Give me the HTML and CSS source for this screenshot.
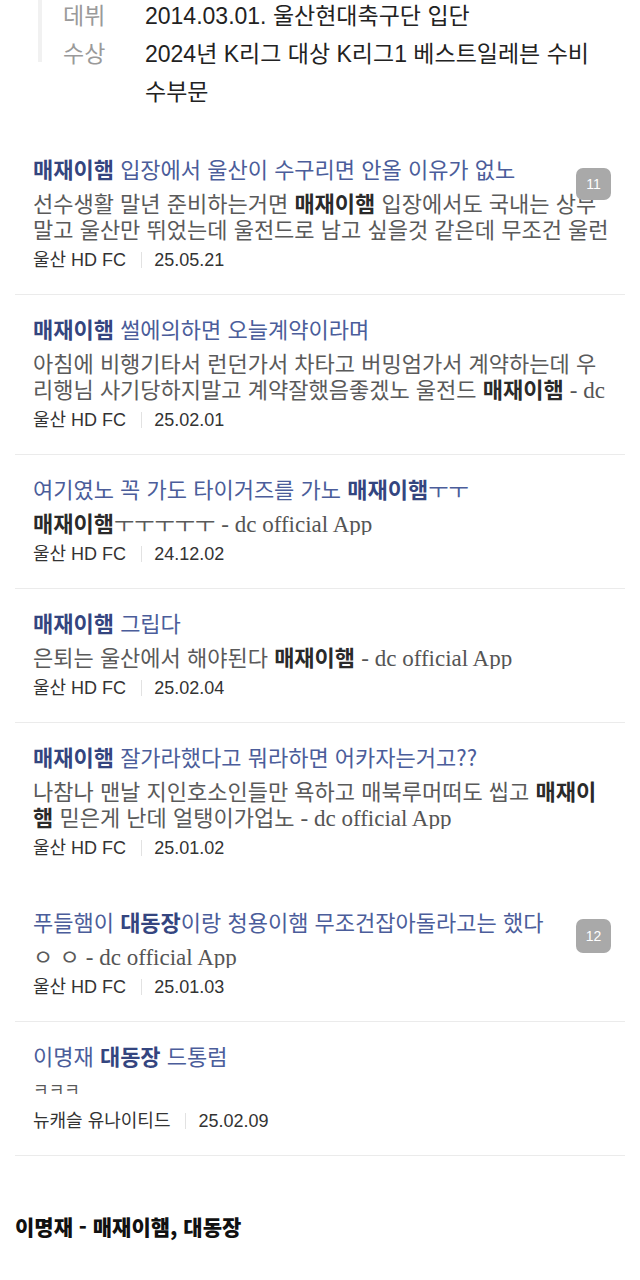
FILE: index.html
```html
<!DOCTYPE html>
<html lang="ko">
<head>
    <meta charset="UTF-8">
    <meta name="viewport" content="width=device-width, initial-scale=1.0">
    <title>이명재 - 매재이햄, 대동장</title>
    <link rel="stylesheet" href="styles.css">
</head>
<body>
    <div class="profile">
        <div class="profile-rule"></div>
        <dl class="profile-info">
            <div class="row">
                <dt>데뷔</dt>
                <dd>2014.03.01. 울산현대축구단 입단</dd>
            </div>
            <div class="row">
                <dt>수상</dt>
                <dd>2024년 K리그 대상 K리그1 베스트일레븐 수비수부문</dd>
            </div>
        </dl>
    </div>

    <ul class="posts">
        <li class="post">
            <div class="title"><b>매재이햄</b> 입장에서 울산이 수구리면 안올 이유가 없노</div>
            <div class="body">선수생활 말년 준비하는거면 <b>매재이햄</b> 입장에서도 국내는 상무 말고 울산만 뛰었는데 울전드로 남고 싶을것 같은데 무조건 울런</div>
            <div class="meta"><span>울산 HD FC</span><span class="bar"></span><span>25.05.21</span></div>
            <span class="badge">11</span>
        </li>
        <li class="post">
            <div class="title"><b>매재이햄</b> 썰에의하면 오늘계약이라며</div>
            <div class="body">아침에 비행기타서 런던가서 차타고 버밍엄가서 계약하는데 우리행님 사기당하지말고 계약잘했음좋겠노 울전드 <b>매재이햄</b> <span class="app">- dc official App</span></div>
            <div class="meta"><span>울산 HD FC</span><span class="bar"></span><span>25.02.01</span></div>
        </li>
        <li class="post">
            <div class="title">여기였노 꼭 가도 타이거즈를 가노 <b>매재이햄</b>ㅜㅜ</div>
            <div class="body"><b>매재이햄</b>ㅜㅜㅜㅜㅜ <span class="app">- dc official App</span></div>
            <div class="meta"><span>울산 HD FC</span><span class="bar"></span><span>24.12.02</span></div>
        </li>
        <li class="post">
            <div class="title"><b>매재이햄</b> 그립다</div>
            <div class="body">은퇴는 울산에서 해야된다 <b>매재이햄</b> <span class="app">- dc official App</span></div>
            <div class="meta"><span>울산 HD FC</span><span class="bar"></span><span>25.02.04</span></div>
        </li>
        <li class="post group-end">
            <div class="title"><b>매재이햄</b> 잘가라했다고 뭐라하면 어카자는거고??</div>
            <div class="body">나참나 맨날 지인호소인들만 욕하고 매북루머떠도 씹고 <b>매재이햄</b> 믿은게 난데 얼탱이가업노 <span class="app">- dc official App</span></div>
            <div class="meta"><span>울산 HD FC</span><span class="bar"></span><span>25.01.02</span></div>
        </li>
        <li class="post group-start">
            <div class="title">푸들햄이 <b>대동장</b>이랑 청용이햄 무조건잡아돌라고는 했다</div>
            <div class="body">ㅇ ㅇ <span class="app">- dc official App</span></div>
            <div class="meta"><span>울산 HD FC</span><span class="bar"></span><span>25.01.03</span></div>
            <span class="badge">12</span>
        </li>
        <li class="post">
            <div class="title">이명재 <b>대동장</b> 드통럼</div>
            <div class="body small">ㅋㅋㅋ</div>
            <div class="meta"><span>뉴캐슬 유나이티드</span><span class="bar"></span><span>25.02.09</span></div>
        </li>
    </ul>

    <p class="caption">이명재 - 매재이햄, 대동장</p>
</body>
</html>
```

FILE: styles.css
```css
body {
    margin: 0;
    background-color: #fff;
    font-family: "Liberation Sans", "Noto Sans CJK KR", sans-serif;
    color: #222;
}
.profile {
    display: flex;
    align-items: flex-start;
    margin-top: -3px;
}
.profile-rule {
    width: 4px;
    height: 65px;
    margin-left: 38px;
    background-color: #f1f1f1;
}
.profile-info {
    margin: 0 0 0 21px;
    width: 540px;
    font-size: 23px;
    line-height: 38px;
}
.profile-info .row {
    display: flex;
}
.profile-info dt {
    width: 82px;
    flex-shrink: 0;
    color: #9a9a9a;
}
.profile-info dd {
    margin: 0;
    color: #222;
}
.posts {
    list-style: none;
    margin: 24px 15px 0;
    padding: 0;
}
.post {
    position: relative;
    padding: 18px 14px 21px 18px;
    border-bottom: 1px solid #ebebeb;
}
.post.group-end {
    border-bottom: none;
    padding-bottom: 16px;
}
.post.group-start {
    padding-top: 29px;
}
.title {
    font-family: "Noto Sans CJK KR", sans-serif;
    font-size: 22px;
    line-height: 30px;
    color: #4b5d9a;
}
.title b {
    font-weight: 700;
    color: #34457f;
}
.body {
    margin-top: 6px;
    font-family: "Noto Sans CJK KR", sans-serif;
    font-size: 22px;
    line-height: 26px;
    color: #5a5a5a;
    max-height: 52px;
    overflow: hidden;
}
.body b {
    font-weight: 700;
    color: #2a2a2a;
}
.body.small {
    font-size: 17px;
}
.app {
    font-family: "Liberation Serif", serif;
    font-size: 23px;
    line-height: 16px;
    color: #555;
}
.meta {
    margin-top: 6px;
    display: flex;
    align-items: center;
    font-size: 18px;
    line-height: 26px;
    color: #333;
}
.meta .bar {
    width: 1px;
    height: 16px;
    margin: 0 12px 0 15px;
    background-color: #e2e2e2;
}
.badge {
    position: absolute;
    top: 33px;
    right: 14px;
    width: 35px;
    height: 32px;
    border-radius: 7px;
    background-color: #a9a9a9;
    color: #fff;
    font-size: 14px;
    line-height: 32px;
    text-align: center;
}
.group-start .badge {
    top: 42px;
    height: 34px;
    line-height: 34px;
}
.caption {
    margin: 55px 0 0 15px;
    font-family: "Noto Sans CJK KR", sans-serif;
    font-weight: 900;
    font-size: 21px;
    line-height: 30px;
    color: #111;
}
```
